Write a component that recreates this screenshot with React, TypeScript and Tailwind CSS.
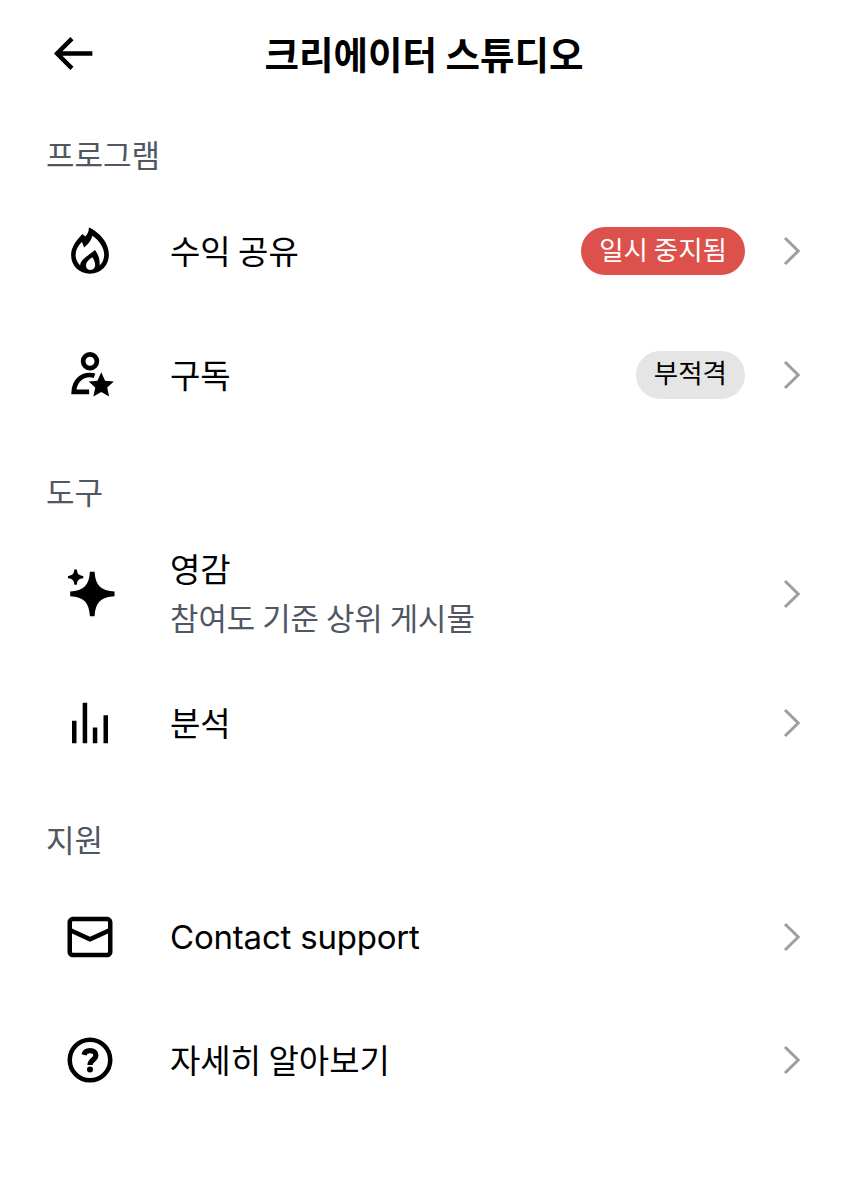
import React from 'react';

type IconProps = { className?: string };

const Svg = ({ className = 'size-[54px]', children }: IconProps & { children: React.ReactNode }) => (
  <svg viewBox="0 0 24 24" fill="currentColor" className={`${className} shrink-0`} aria-hidden="true">
    {children}
  </svg>
);

const BackIcon = () => (
  <Svg className="size-[53px]">
    <path d="M7.414 13l5.043 5.04-1.414 1.42L3.586 12l7.457-7.46 1.414 1.42L7.414 11H21v2H7.414z" />
  </Svg>
);

const FlameIcon = () => (
  <Svg>
    <path
      fillRule="evenodd"
      d="M11.5 1.6C15.8 3.5 20.4 8 20.4 13.7c0 4.9-3.6 8.4-8.4 8.4s-8.4-3.5-8.4-8.3c0-3.5 2-6.2 5-9.4l1.3 1.2c1.1-1.2 1.6-2.3 1.6-4zM13 5.2c-.4 2-1.6 3.6-3.6 5.2L8.4 7.9C6.6 9.8 5.6 11.6 5.6 13.8c0 1.8.7 3.3 2 4.6.2-2.7 3.1-3.9 6.6-6.8 1.6 2.1 2.2 4.1 2.1 6.8 1.3-1.2 2-2.8 2-4.7 0-3.4-2.3-6.5-5.3-8.5zM13 14.8c-1.8 1.3-2.8 2.3-2.8 3.6 0 1.2.8 2 2 2s2.1-.9 2.1-2.2c0-1.2-.5-2.4-1.3-3.4z"
    />
  </Svg>
);

const SubscriberIcon = () => (
  <Svg>
    <circle cx="12" cy="5.9" r="3.05" fill="none" stroke="currentColor" strokeWidth="2.1" />
    <path
      d="M11.6 19.5H4.8c.3-4.5 3-7.5 7.2-7.5.7 0 1.4.1 2 .3"
      fill="none"
      stroke="currentColor"
      strokeWidth="2.1"
    />
    <path d="M17 10.8l1.7 3.8 3.9.3-2.95 2.7.85 4L17 19.6l-3.5 2 .85-4-2.95-2.7 3.9-.3z" />
  </Svg>
);

const SparkleIcon = () => (
  <Svg>
    <path d="M11.95 2.1h2.1c.3 6 2.8 8.5 8.85 8.8v2.1c-6.05.3-8.55 2.8-8.85 8.85h-2.1c-.3-6.05-2.8-8.55-8.75-8.85v-2.1c5.95-.3 8.45-2.8 8.75-8.8z" />
    <path d="M5.05 1.1h1.1c.2 2 .85 2.65 2.85 2.85v1.1c-2 .2-2.65.85-2.85 2.85h-1.1C4.85 5.9 4.2 5.25 2.2 5.05v-1.1c2-.2 2.65-.85 2.85-2.85z" />
  </Svg>
);

const AnalyticsIcon = () => (
  <Svg>
    <path d="M8.75 21V3h2v18h-2zM18 21V8.5h2V21h-2zM4 21l.004-10h2L6 21H4zm9.248 0v-7h2v7h-2z" />
  </Svg>
);

const MailIcon = () => (
  <Svg>
    <path d="M1.998 5.5c0-1.381 1.119-2.5 2.5-2.5h15c1.381 0 2.5 1.119 2.5 2.5v13c0 1.381-1.119 2.5-2.5 2.5h-15c-1.381 0-2.5-1.119-2.5-2.5v-13zm2.5-.5c-.276 0-.5.224-.5.5v2.764l8 3.638 8-3.636V5.5c0-.276-.224-.5-.5-.5h-15zm15.5 5.463l-8 3.636-8-3.638V18.5c0 .276.224.5.5.5h15c.276 0 .5-.224.5-.5v-8.037z" />
  </Svg>
);

const HelpIcon = () => (
  <Svg>
    <circle cx="12" cy="12" r="9" fill="none" stroke="currentColor" strokeWidth="2" />
    <path
      d="M9.3 9.7c.3-1.2 1.3-1.9 2.7-1.9 1.6 0 2.6.8 2.6 2.1 0 2.1-2.6 2-2.6 4.3"
      fill="none"
      stroke="currentColor"
      strokeWidth="2.3"
    />
    <circle cx="12" cy="16.2" r="1.35" />
  </Svg>
);

const ChevronIcon = () => (
  <svg viewBox="0 0 18 30" className="h-[30px] w-[18px] shrink-0 text-[#9e9e9e]" fill="none" aria-hidden="true">
    <path d="M2 2l13.2 13L2 28" stroke="currentColor" strokeWidth="3" />
  </svg>
);

type Item = {
  id: string;
  icon: React.ReactNode;
  title: string;
  subtitle?: string;
  badge?: { text: string; tone: 'danger' | 'neutral' };
  latin?: boolean;
};

const sections: { label: string; items: Item[] }[] = [
  {
    label: '프로그램',
    items: [
      { id: 'revenue', icon: <FlameIcon />, title: '수익 공유', badge: { text: '일시 중지됨', tone: 'danger' } },
      { id: 'subscriptions', icon: <SubscriberIcon />, title: '구독', badge: { text: '부적격', tone: 'neutral' } },
    ],
  },
  {
    label: '도구',
    items: [
      { id: 'inspiration', icon: <SparkleIcon />, title: '영감', subtitle: '참여도 기준 상위 게시물' },
      { id: 'analytics', icon: <AnalyticsIcon />, title: '분석' },
    ],
  },
  {
    label: '지원',
    items: [
      { id: 'contact', icon: <MailIcon />, title: 'Contact support', latin: true },
      { id: 'learn', icon: <HelpIcon />, title: '자세히 알아보기' },
    ],
  },
];

function Badge({ text, tone }: { text: string; tone: 'danger' | 'neutral' }) {
  return (
    <span
      className={`mr-[38px] flex h-12 items-center rounded-full px-[18px] pb-1 text-[26.5px] leading-none ${
        tone === 'danger' ? 'bg-[#dd514c] text-white' : 'bg-[#e5e5e5] text-black'
      }`}
    >
      {text}
    </span>
  );
}

function Row({ item }: { item: Item }) {
  return (
    <button
      type="button"
      className={`flex w-full items-center pr-[47px] pl-[63px] text-left ${item.subtitle ? 'h-[134px]' : 'h-[123.5px]'}`}
    >
      {item.icon}
      <span className={`ml-[53px] flex flex-1 flex-col ${item.latin ? '' : item.subtitle ? 'pb-[3px]' : 'pb-[2px]'}`}>
        <span
          className={
            item.latin
              ? "font-['Inter',sans-serif] text-[33px] leading-[48px] tracking-[-0.2px]"
              : 'text-[33px] leading-[48px]'
          }
        >
          {item.title}
        </span>
        {item.subtitle && <span className="text-[30.9px] leading-[49px] text-[#505763]">{item.subtitle}</span>}
      </span>
      {item.badge && <Badge text={item.badge.text} tone={item.badge.tone} />}
      <ChevronIcon />
    </button>
  );
}

export default function App() {
  return (
    <div className="min-h-[1200px] w-full bg-white font-['Noto_Sans_CJK_KR',sans-serif] text-black">
      <header className="grid h-[98.75px] grid-cols-[100px_1fr_100px] items-start pt-[27px]">
        <button type="button" className="pl-[46px]" aria-label="뒤로">
          <BackIcon />
        </button>
        <h1 className="text-center text-[37.5px] leading-[52px] font-bold">크리에이터 스튜디오</h1>
      </header>
      {sections.map((section) => (
        <section key={section.label}>
          <h2 className="h-[90.5px] pt-[31px] pl-[46px] text-[31px] leading-[48px] text-[#505763]">{section.label}</h2>
          {section.items.map((item) => (
            <Row key={item.id} item={item} />
          ))}
        </section>
      ))}
    </div>
  );
}
